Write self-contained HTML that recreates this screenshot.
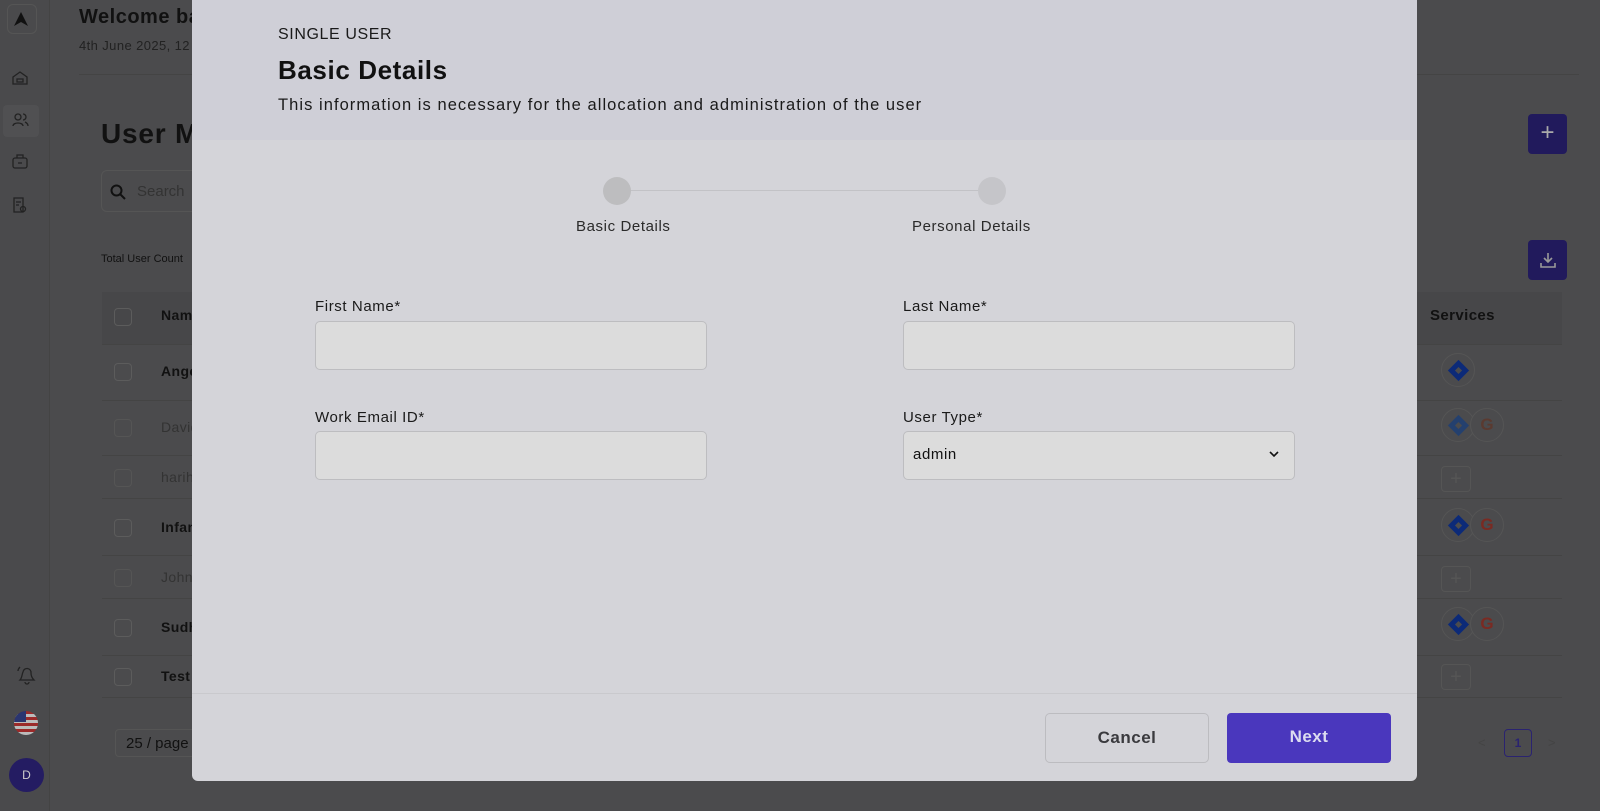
<!DOCTYPE html>
<html><head><meta charset="utf-8"><style>
*{box-sizing:border-box;margin:0;padding:0}
body{width:1600px;height:811px;overflow:hidden;background:#4b4b4d;font-family:"Liberation Sans",sans-serif;position:relative}
.a{position:absolute}
.side{left:0;top:0;width:50px;height:811px;background:#4a4a4c;border-right:1px solid #444}
.cb{width:18px;height:18px;border:1px solid #5c5c5c;border-radius:4px;position:absolute;left:114px}
.row{position:absolute;left:102px;width:1460px;border-top:1px solid #444}
.nm{position:absolute;left:161px;font-size:14px;font-weight:bold;color:#111;letter-spacing:.4px}
.modal{left:192px;top:0;width:1225px;height:781px;background:#d4d4d9;border-radius:0 0 6px 6px;overflow:hidden;letter-spacing:.5px}
.hdr{left:0;top:0;width:1225px;height:140px;background:#cfcfd7}
.lbl{font-size:15px;color:#1a1a1a;letter-spacing:.6px}
.inp{width:392px;height:49px;border:1px solid #bdbdc0;border-radius:5px;background:#dcdcdc}
.svc{width:34px;height:34px;border-radius:50%;border:1px solid #555;position:absolute;background:#4b4b4d}
.dia{position:absolute;left:9px;top:9px;width:15px;height:15px;background:#0c2a78;transform:rotate(45deg)}
.dia:after{content:"";position:absolute;left:5px;top:5px;width:5px;height:5px;background:#4b4b4d}
.g{position:absolute;left:0;top:0;width:32px;height:32px;text-align:center;line-height:32px;font-weight:bold;font-size:17px;color:#7a2a22}
.plus{width:30px;height:26px;border:1px solid #555;border-radius:4px;position:absolute;left:1441px;color:#555;text-align:center;font-size:20px;line-height:24px}
</style></head><body>
<div class="a side">
 <div class="a" style="left:7px;top:4px;width:30px;height:30px;border:1px solid #555;border-radius:6px"></div>
 <svg class="a" style="left:13px;top:11px" width="16" height="16"><path d="M8 1L15 15L8 11L1 15Z" fill="#111"/></svg>
 <div class="a" style="left:3px;top:105px;width:36px;height:32px;background:#505052;border-radius:4px"></div>
 <svg class="a" style="left:11px;top:70px" width="18" height="150" fill="none" stroke="#222" stroke-width="1.3"><path d="M2 7L9 2L16 7V14H2Z"/><path d="M6 9h6v3H6z"/><circle cx="7" cy="47" r="3"/><path d="M2 56c0-4 10-4 10 0M12 44a3 3 0 010 6M14 52c2 1 3 2 3 4"/><rect x="2" y="88" width="14" height="10" rx="2"/><path d="M6 88v-3h6v3M7 93h4"/><path d="M3 128h9v14H3zM5 132h5M5 135h3"/><circle cx="12" cy="139" r="2.5"/></svg>
 <svg class="a" style="left:15px;top:664px" width="22" height="22" fill="none" stroke="#222" stroke-width="1.3"><path d="M5 16c2-2 2-6 3-8a4 4 0 018 1c0 3 1 5 3 7zM10 18a2 2 0 004 0M3 7c0-2 1-3 2-4"/></svg>
 <div class="a" style="left:14px;top:711px;width:24px;height:24px;border-radius:50%;overflow:hidden;background:repeating-linear-gradient(#9b2a2a 0 3px,#bbb 3px 6px)"><div style="width:12px;height:11px;background:#2a3570"></div></div>
 <div class="a" style="left:9px;top:758px;width:35px;height:34px;border-radius:50%;background:#241c62;color:#ccc;font-size:12px;text-align:center;line-height:34px">D</div>
</div>
<div class="a" style="left:79px;top:6px;font-size:20px;font-weight:bold;color:#111;letter-spacing:.5px">Welcome back</div>
<div class="a" style="left:79px;top:38px;font-size:13px;color:#222;letter-spacing:.4px">4th June 2025, 12</div>
<div class="a" style="left:79px;top:74px;width:1500px;border-top:1px solid #444"></div>
<div class="a" style="left:101px;top:118px;font-size:28px;font-weight:bold;color:#111;letter-spacing:.8px">User Management</div>
<div class="a" style="left:101px;top:170px;width:200px;height:42px;border:1px solid #555;border-radius:6px"></div>
<svg class="a" style="left:110px;top:184px" width="16" height="16" fill="none" stroke="#111" stroke-width="2"><circle cx="6.5" cy="6.5" r="5"/><path d="M10 10l5 5"/></svg>
<div class="a" style="left:137px;top:183px;font-size:15px;color:#333">Search</div>
<div class="a" style="left:101px;top:253px;font-size:11px;color:#111">Total User Count</div>
<div class="a" style="left:1528px;top:114px;width:39px;height:40px;background:#211a5c;border-radius:4px;color:#aaa;font-size:24px;text-align:center;line-height:38px">+</div>
<div class="a" style="left:1528px;top:240px;width:39px;height:40px;background:#211a5c;border-radius:4px"></div>
<svg class="a" style="left:1539px;top:251px" width="18" height="18" fill="none" stroke="#999" stroke-width="1.6"><path d="M9 2v9M5 7l4 4 4-4M2 12v4h14v-4"/></svg>
<div class="a" style="left:102px;top:292px;width:1460px;height:52px;background:#474749"></div>
<div class="a" style="left:1430px;top:307px;font-size:15px;font-weight:bold;color:#111;letter-spacing:.4px">Services</div>
<div class="cb" style="top:308px"></div><div class="nm" style="top:307px">Name</div>
<div class="row" style="top:344px"></div><div class="cb" style="top:363px"></div><div class="nm" style="top:363px">Angel</div>
<div class="row" style="top:400px"></div><div class="cb" style="top:419px;border-color:#555"></div><div class="nm" style="top:419px;color:#333;font-weight:normal">David</div>
<div class="row" style="top:455px"></div><div class="cb" style="top:469px;border-color:#555"></div><div class="nm" style="top:469px;color:#333;font-weight:normal">harih</div>
<div class="row" style="top:498px"></div><div class="cb" style="top:519px"></div><div class="nm" style="top:519px">Infant</div>
<div class="row" style="top:555px"></div><div class="cb" style="top:569px;border-color:#555"></div><div class="nm" style="top:569px;color:#333;font-weight:normal">John</div>
<div class="row" style="top:598px"></div><div class="cb" style="top:619px"></div><div class="nm" style="top:619px">Sudh</div>
<div class="row" style="top:655px"></div><div class="cb" style="top:668px"></div><div class="nm" style="top:668px">Test</div>
<div class="row" style="top:697px"></div>
<div class="svc" style="left:1441px;top:353px"><div class="dia"></div></div>
<div class="svc" style="left:1441px;top:408px"><div class="dia" style="background:#24406e"></div></div><div class="svc" style="left:1470px;top:408px"><div class="g" style="color:#5a3a30">G</div></div>
<div class="svc" style="left:1441px;top:508px"><div class="dia"></div></div><div class="svc" style="left:1470px;top:508px"><div class="g">G</div></div>
<div class="svc" style="left:1441px;top:607px"><div class="dia"></div></div><div class="svc" style="left:1470px;top:607px"><div class="g">G</div></div>
<div class="plus" style="top:466px">+</div><div class="plus" style="top:566px">+</div><div class="plus" style="top:664px">+</div>
<div class="a" style="left:115px;top:729px;width:90px;height:28px;border:1px solid #555;border-radius:4px;font-size:15px;color:#111;padding:5px 10px">25 / page</div>
<div class="a" style="left:1478px;top:735px;font-size:13px;color:#444">&lt;</div>
<div class="a" style="left:1548px;top:735px;font-size:13px;color:#444">&gt;</div>
<div class="a" style="left:1504px;top:729px;width:28px;height:28px;border:1px solid #2a2370;border-radius:4px;font-size:12px;color:#2a2370;text-align:center;line-height:26px;font-weight:bold">1</div>

<div class="a modal">
 <div class="a hdr"></div>
 <div class="a" style="left:86px;top:26px;font-size:16px;color:#1a1a1a;letter-spacing:.6px">SINGLE USER</div>
 <div class="a" style="left:86px;top:55px;font-size:26px;font-weight:bold;color:#111;letter-spacing:.6px">Basic Details</div>
 <div class="a" style="left:86px;top:96px;font-size:16.5px;color:#1a1a1a;letter-spacing:1.05px">This information is necessary for the allocation and administration of the user</div>
 <div class="a" style="left:424px;top:190px;width:372px;border-top:1px solid #c2c2c6"></div>
 <div class="a" style="left:411px;top:177px;width:28px;height:28px;border-radius:50%;background:#bdbdbf"></div>
 <div class="a" style="left:786px;top:177px;width:28px;height:28px;border-radius:50%;background:#c5c5c9"></div>
 <div class="a" style="left:384px;top:218px;font-size:15px;color:#2a2a2a;letter-spacing:.6px">Basic Details</div>
 <div class="a" style="left:720px;top:218px;font-size:15px;color:#2a2a2a;letter-spacing:.6px">Personal Details</div>
 <div class="a lbl" style="left:123px;top:298px">First Name*</div>
 <div class="a inp" style="left:123px;top:321px"></div>
 <div class="a lbl" style="left:711px;top:298px">Last Name*</div>
 <div class="a inp" style="left:711px;top:321px"></div>
 <div class="a lbl" style="left:123px;top:409px">Work Email ID*</div>
 <div class="a inp" style="left:123px;top:431px"></div>
 <div class="a lbl" style="left:711px;top:409px">User Type*</div>
 <div class="a inp" style="left:711px;top:431px"></div>
 <div class="a" style="left:721px;top:446px;font-size:15px;color:#111;letter-spacing:.6px">admin</div>
 <svg class="a" style="left:1076px;top:449px" width="12" height="10"><path d="M2 3l4 4 4-4" stroke="#111" stroke-width="1.6" fill="none"/></svg>
 <div class="a" style="left:0;top:693px;width:1225px;border-top:1px solid #c9c9cd"></div>
 <div class="a" style="left:853px;top:713px;width:164px;height:50px;border:1px solid #bcbcc0;border-radius:5px;font-size:17px;font-weight:bold;color:#3a3a3e;text-align:center;line-height:48px">Cancel</div>
 <div class="a" style="left:1035px;top:713px;width:164px;height:50px;background:#4a37bd;border-radius:4px;font-size:17px;font-weight:bold;color:#dcdcf0;text-align:center;line-height:48px">Next</div>
</div>
</body></html>
